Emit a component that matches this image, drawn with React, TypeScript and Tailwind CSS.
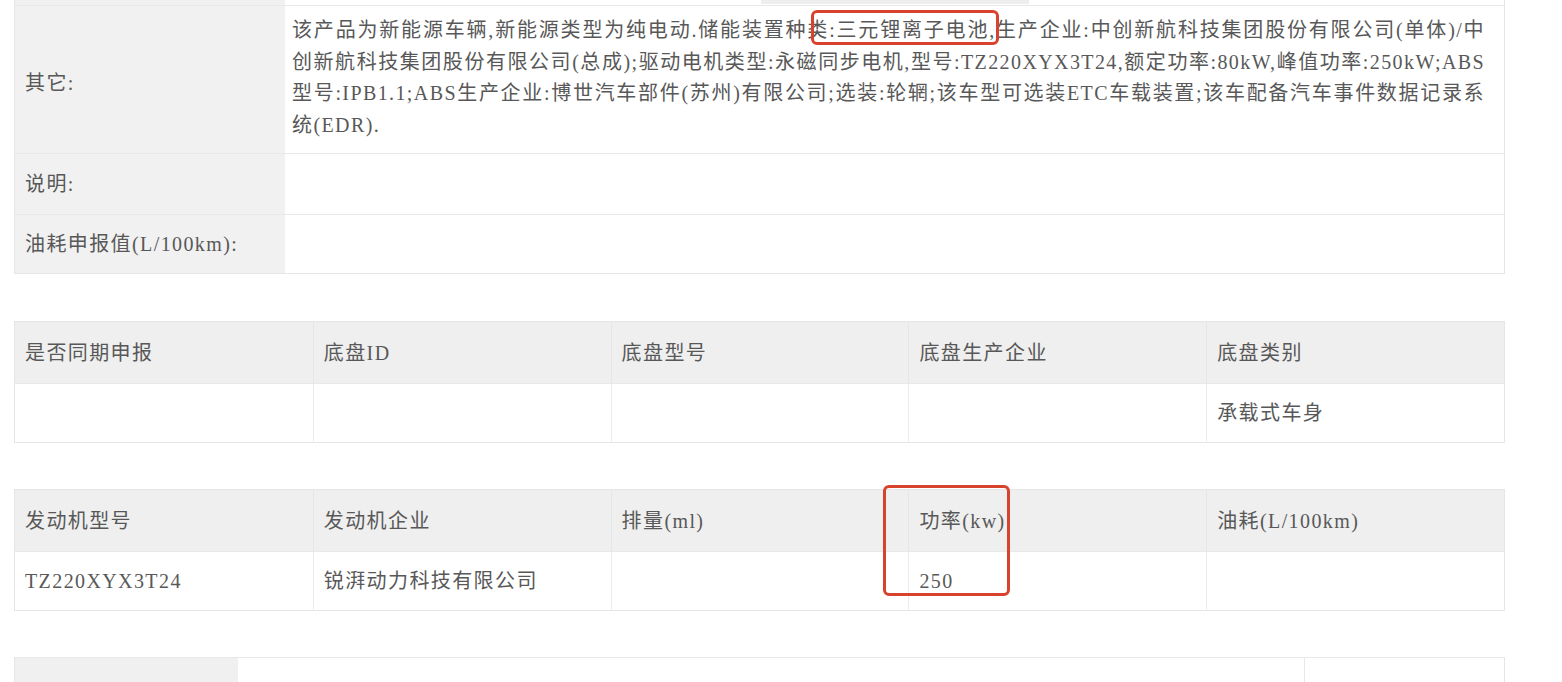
import React from "react";

const lines = [
  "该产品为新能源车辆,新能源类型为纯电动.储能装置种类:三元锂离子电池,生产企业:中创新航科技集团股份有限公司(单体)/中",
  "创新航科技集团股份有限公司(总成);驱动电机类型:永磁同步电机,型号:TZ220XYX3T24,额定功率:80kW,峰值功率:250kW;ABS",
  "型号:IPB1.1;ABS生产企业:博世汽车部件(苏州)有限公司;选装:轮辋;该车型可选装ETC车载装置;该车配备汽车事件数据记录系",
];

function FiveTable({ head, row }: { head: string[]; row: string[] }) {
  return (
    <div className="w-[1491px] border border-[#e6e6e6]">
      <div className="grid grid-cols-5 h-[62px] bg-[#efefef] border-b border-[#e8e8e8]">
        {head.map((h, i) => (
          <div
            key={i}
            className={`flex items-center pl-[10px] ${i > 0 ? "border-l border-[#e6e6e6]" : ""}`}
          >
            {h}
          </div>
        ))}
      </div>
      <div className="grid grid-cols-5 h-[58px] bg-white">
        {row.map((h, i) => (
          <div
            key={i}
            className={`flex items-center pl-[10px] ${i > 0 ? "border-l border-[#ececec]" : ""}`}
          >
            {h}
          </div>
        ))}
      </div>
    </div>
  );
}

export default function App() {
  return (
    <div className="relative w-[1562px] h-[682px] overflow-hidden bg-white pl-[14px] text-[#585858] text-[20px] tracking-[1.4px] font-['Liberation_Serif','Noto_Sans_CJK_SC',serif]">
      {/* Table 1 */}
      <div className="w-[1491px] border-x border-b border-[#e6e6e6]">
        <div className="flex h-[6px] border-b border-[#e8e8e8]">
          <div className="w-[270px] bg-[#f1f1f1]" />
          <div className="flex-1 bg-white pl-[476px]">
            <div className="w-[268px] h-[4px] bg-[#eeeeee]" />
          </div>
        </div>
        <div className="flex h-[148px] border-b border-[#e8e8e8]">
          <div className="w-[270px] bg-[#f1f1f1] flex items-center pl-[10px] pt-[6px]">其它:</div>
          <div className="flex-1 pl-[7px] pr-[19px] pt-[9px] leading-[31.5px]">
            {lines.map((l, i) => (
              <div key={i} className="whitespace-nowrap text-justify [text-align-last:justify]">
                {l}
              </div>
            ))}
            <div>统(EDR).</div>
          </div>
        </div>
        <div className="flex h-[61px] border-b border-[#e8e8e8]">
          <div className="w-[270px] bg-[#f1f1f1] flex items-center pl-[10px]">说明:</div>
          <div className="flex-1" />
        </div>
        <div className="flex h-[58px]">
          <div className="w-[270px] bg-[#f1f1f1] flex items-center pl-[10px]">油耗申报值(L/100km):</div>
          <div className="flex-1" />
        </div>
      </div>

      <div className="mt-[47px]">
        <FiveTable
          head={["是否同期申报", "底盘ID", "底盘型号", "底盘生产企业", "底盘类别"]}
          row={["", "", "", "", "承载式车身"]}
        />
      </div>

      <div className="mt-[46px]">
        <FiveTable
          head={["发动机型号", "发动机企业", "排量(ml)", "功率(kw)", "油耗(L/100km)"]}
          row={["TZ220XYX3T24", "锐湃动力科技有限公司", "", "250", ""]}
        />
      </div>

      <div className="mt-[46px] w-[1491px] flex h-[40px] border-t border-[#e8e8e8]">
        <div className="w-[224px] bg-[#f0f0f0] border-l border-[#e6e6e6]" />
        <div className="w-[1067px] border-r border-[#e8e8e8]" />
        <div className="flex-1 border-r border-[#e6e6e6]" />
      </div>

      {/* annotation boxes */}
      <div className="absolute left-[811px] top-[10px] w-[188px] h-[35px] border-[3px] border-[#d8432e] rounded-[6px]" />
      <div className="absolute left-[883px] top-[485px] w-[127px] h-[111px] border-[3px] border-[#d8432e] rounded-[6px]" />
    </div>
  );
}
